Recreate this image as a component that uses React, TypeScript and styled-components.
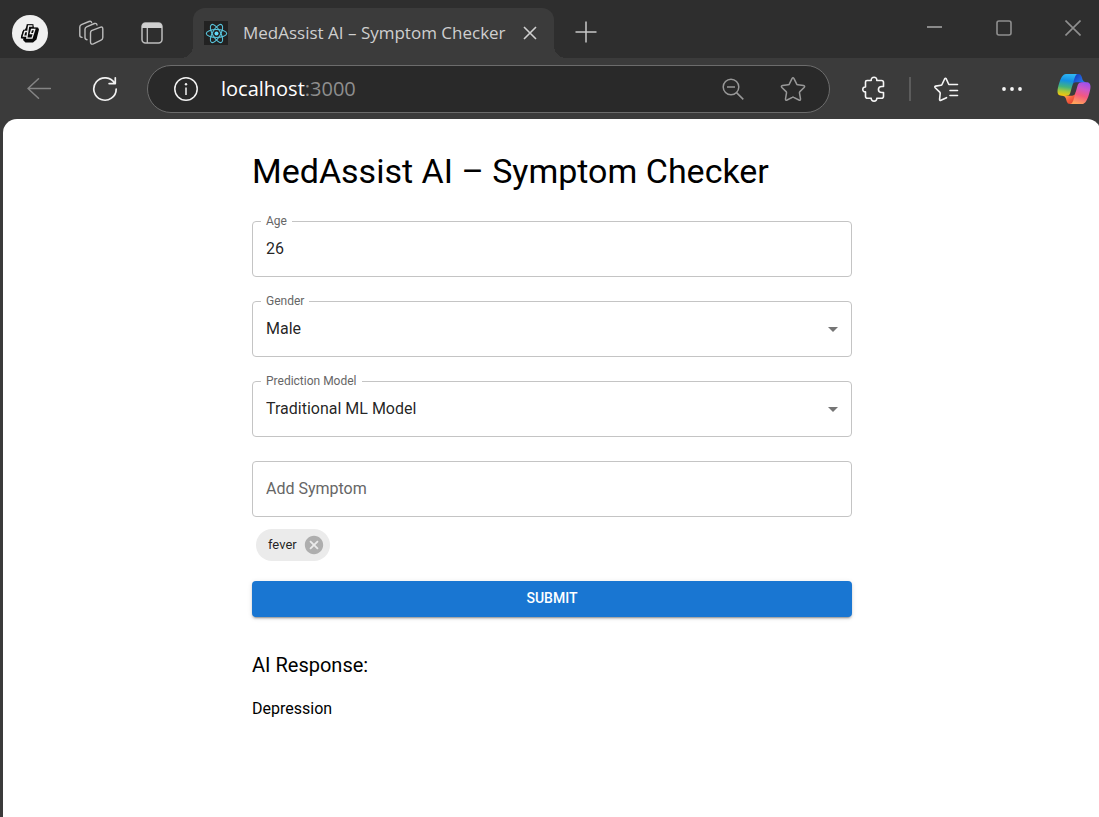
import React, { useState } from "react";
import styled, { createGlobalStyle } from "styled-components";

const GlobalStyle = createGlobalStyle`
  *, *::before, *::after { box-sizing: border-box; }
  body { margin: 0; background: #3b3b3b; }
  button, input, select { font: inherit; color: inherit; margin: 0; }
  button { border: 0; background: none; padding: 0; cursor: pointer; }
  svg { display: block; flex: none; }
`;

const Browser = styled.div`
  min-height: 100vh;
  display: flex;
  flex-direction: column;
  overflow: hidden;
  background: #3b3b3b;
  font-family: "Open Sans", "Noto Sans", sans-serif;
`;

const TabStrip = styled.header`
  display: flex;
  height: 58px;
  padding-left: 12px;
  background: #2e2e2e;
`;

const StripTools = styled.div`
  display: flex;
  align-items: center;
  gap: 25px;
  height: 66px;
  padding-right: 23px;
`;

const StripButton = styled.button`
  display: grid;
  place-items: center;
  width: 36px;
  height: 36px;
`;

const Avatar = styled(StripButton)`
  border-radius: 50%;
  background: #f0f0f0;
`;

const Tab = styled.div`
  position: relative;
  display: flex;
  align-items: center;
  width: 361px;
  height: 50px;
  margin-top: 8px;
  padding: 0 14px 0 11px;
  border-radius: 12px 12px 0 0;
  background: #3b3b3b;
  color: #cfcfcf;

  &::before,
  &::after {
    content: "";
    position: absolute;
    bottom: 0;
    width: 12px;
    height: 12px;
  }
  &::before {
    right: 100%;
    background: radial-gradient(circle at 0 0, transparent 12px, #3b3b3b 12px);
  }
  &::after {
    left: 100%;
    background: radial-gradient(circle at 100% 0, transparent 12px, #3b3b3b 12px);
  }
`;

const TabTitle = styled.span`
  flex: 1;
  margin-left: 15px;
  font-size: 17px;
  line-height: 24px;
  white-space: nowrap;
`;

const TabButton = styled.button`
  display: grid;
  place-items: center;
  width: 20px;
  height: 20px;
`;

const NewTab = styled.button`
  display: grid;
  place-items: center;
  width: 40px;
  height: 40px;
  margin: 12px auto 0 12px;
`;

const WindowControls = styled.div`
  display: flex;
  margin-right: -8px;
`;

const WindowButton = styled.button`
  display: grid;
  place-items: center;
  width: 69px;
  height: 56px;
`;

const Toolbar = styled.nav`
  display: flex;
  align-items: center;
  height: 61px;
  padding: 0 7px 0 6px;
`;

const ToolButton = styled.button`
  display: grid;
  place-items: center;
  width: 66px;
  height: 48px;
`;

const CopilotButton = styled.button`
  display: grid;
  place-items: center end;
  width: 47px;
  height: 48px;
`;

const AddressBar = styled.div`
  flex: 1;
  display: flex;
  align-items: center;
  height: 48px;
  margin: 0 10px 0 9px;
  padding: 0 23px 0 25px;
  border: 1px solid #6c6c6c;
  border-radius: 24px;
  background: #292929;
`;

const Address = styled.span`
  flex: 1;
  margin-left: 22px;
  color: #8e8e8e;
  font-size: 20px;
  line-height: 28px;
  b { color: #fff; font-weight: 400; }
`;

const AddressActions = styled.div`
  display: flex;
  gap: 34px;
`;

const AddressButton = styled.button`
  display: grid;
  place-items: center;
  width: 26px;
  height: 26px;
`;

const Divider = styled.span`
  width: 2px;
  height: 24px;
  margin: 0 2px 0 3px;
  background: #5c5c5c;
`;

const Page = styled.main`
  flex: 1;
  margin: 0 -2px 0 3px;
  padding: 31px 24px;
  border-radius: 14px 14px 0 0;
  background: #fff;
  color: #000;
  font-family: Roboto, "Liberation Sans", sans-serif;
  font-size: 16px;
  line-height: 24px;
`;

const Form = styled.form`
  max-width: 600px;
  margin: 0 auto;
`;

const Title = styled.h1`
  margin: 0 0 29px;
  font-size: 34px;
  font-weight: 400;
  line-height: 42px;
`;

const Field = styled.div`
  position: relative;
  margin-bottom: 24px;
  color: rgba(0, 0, 0, 0.87);
`;

const FieldLabel = styled.label`
  position: absolute;
  top: -8px;
  left: 9px;
  padding: 0 5px;
  background: #fff;
  color: #666;
  font-size: 12px;
  line-height: 16px;
`;

const controlStyle = `
  display: block;
  width: 100%;
  height: 56px;
  border: 1px solid #c4c4c4;
  border-radius: 4px;
  background: transparent;
  outline: none;
  &:focus { border-color: #1976d2; }
`;

const TextInput = styled.input`
  ${controlStyle}
  padding: 0 13px 2px;
  &::placeholder { color: #666; opacity: 1; }
`;

const SelectInput = styled.select`
  ${controlStyle}
  padding: 0 13px;
  appearance: none;
`;

const SelectArrow = styled.svg`
  position: absolute;
  top: 16px;
  right: 7px;
  pointer-events: none;
`;

const Chips = styled.div`
  display: flex;
  flex-wrap: wrap;
  gap: 8px;
  margin: -12px 4px 20px;
`;

const Chip = styled.span`
  display: flex;
  align-items: center;
  gap: 6px;
  height: 32px;
  padding: 0 5px 0 12px;
  border-radius: 16px;
  background: #ebebeb;
  color: rgba(0, 0, 0, 0.87);
  font-size: 13px;
`;

const Submit = styled.button`
  display: block;
  width: 100%;
  height: 36px;
  padding-bottom: 2px;
  border-radius: 4px;
  background: #1976d2;
  box-shadow: 0 3px 1px -2px rgba(0, 0, 0, 0.2), 0 2px 2px rgba(0, 0, 0, 0.14),
    0 1px 5px rgba(0, 0, 0, 0.12);
  color: #fff;
  font-size: 14px;
  font-weight: 500;
  text-transform: uppercase;
`;

const ResponseTitle = styled.h2`
  margin: 32px 0 16px;
  font-size: 20px;
  font-weight: 400;
  line-height: 32px;
`;

const Response = styled.p`
  margin: 0;
`;

const AvatarMark = () => (
  <svg width="22" height="24" viewBox="0 0 22 24" strokeLinejoin="miter">
    <path d="M8.500 3.500h5l1.500 3h4l1 2-2.500 10-3.500 3H6.500L4 19l.5-1.500H2.500l-.5-2 1.500-5 2.500-2z" fill="#0b0b0b" />
    <g fill="none" strokeLinecap="square">
      <path d="M12.800 5H9.200L7.800 17.500H13L15.500 8.500H12l-1.200 4.500h3.500M7.600 10.500H5.500L4 15.500h2.500" stroke="#0b0b0b" strokeWidth="3.400" />
      <path d="M12.800 5H9.600L7.800 17.200H13L15.800 8.500H12.500l-1.200 4.200h2.700M7.400 10.500H5.800L4.400 15.200h2.400" stroke="#f0f0f0" strokeWidth="1.300" />
    </g>
  </svg>
);

const WorkspacesIcon = () => (
  <svg width="26" height="26" viewBox="0 0 26 26" fill="none" stroke="#bdbdbd" strokeWidth="1.4" strokeLinecap="round" strokeLinejoin="round">
    <path d="M13.500 10.600 22 7.300q2.800-1 2.800 1.600v8.700q0 1.800-1.700 2.500l-7.700 3.700q-2.900 1.200-2.900-1.700v-9.200q0-1.600 1-2.300z" />
    <path d="M9 19.800q-2-.2-2-2.200V9.200q0-1.700 1.600-2.400l7.800-3.300q2.300-.7 2.600 1.500" />
    <path d="M4 17.400q-2.200-.2-2.200-2.200V7q0-1.700 1.600-2.400L11 1.500q2-.8 2.600 1" />
  </svg>
);

const VerticalTabsIcon = () => (
  <svg width="24" height="24" viewBox="0 0 24 24">
    <rect x="2" y="2" width="20" height="20" rx="3.500" fill="none" stroke="#bdbdbd" strokeWidth="1.500" />
    <path d="M2 7V5.500A3.500 3.500 0 0 1 5.500 2h13A3.500 3.500 0 0 1 22 5.500V7z" fill="#d0d0d0" />
    <path d="M7.300 7v15" stroke="#bdbdbd" strokeWidth="1.300" />
  </svg>
);

const ReactIcon = () => (
  <svg width="24" height="24" viewBox="0 0 24 24">
    <path fill="#222" d="M0 0h24v24H0z" />
    <g fill="none" stroke="#58c4dc" strokeWidth="1.100">
      <ellipse cx="12.500" cy="12.500" rx="10.200" ry="4" />
      <ellipse cx="12.500" cy="12.500" rx="10.200" ry="4" transform="rotate(60 12.500 12.500)" />
      <ellipse cx="12.500" cy="12.500" rx="10.200" ry="4" transform="rotate(120 12.500 12.500)" />
    </g>
    <circle cx="12.500" cy="12.500" r="2" fill="#61dafb" />
  </svg>
);

const StarIcon = () => (
  <svg width="26" height="26" viewBox="-1 0 26 26" fill="none" stroke="#989898" strokeWidth="1.500" strokeLinejoin="round">
    <path d="M11 2.600q1-1.700 2 0l2.600 5.300q.3.800 1.200.9l5.700.8q1.900.4.600 1.900l-4.200 4.100q-.6.600-.4 1.400l1 5.800q.1 2-1.600 1.200l-5.200-2.700q-.7-.4-1.400 0L6.100 24q-1.700.8-1.600-1.200l1-5.800q.2-.8-.4-1.400L.9 11.500q-1.300-1.500.6-1.900l5.700-.8q.9-.1 1.200-.9z" />
  </svg>
);

const CopilotIcon = () => (
  <svg width="36" height="36" viewBox="0 0 48 48">
    <defs>
      <linearGradient id="cpBlue" x1="24" y1="4" x2="36" y2="16" gradientUnits="userSpaceOnUse">
        <stop stopColor="#1436b8" /><stop offset="1" stopColor="#2a7cf0" />
      </linearGradient>
      <linearGradient id="cpRed" x1="12" y1="31" x2="22" y2="44" gradientUnits="userSpaceOnUse">
        <stop stopColor="#ffb04a" /><stop offset=".5" stopColor="#f8633f" /><stop offset="1" stopColor="#e0402f" />
      </linearGradient>
      <linearGradient id="cpLeft" x1="15" y1="4" x2="11" y2="33" gradientUnits="userSpaceOnUse">
        <stop stopColor="#2fb5f2" /><stop offset=".3" stopColor="#1290e4" /><stop offset=".6" stopColor="#45b37c" />
        <stop offset=".8" stopColor="#a7c83c" /><stop offset="1" stopColor="#f6c60a" />
      </linearGradient>
      <linearGradient id="cpRight" x1="39" y1="15" x2="29" y2="44" gradientUnits="userSpaceOnUse">
        <stop stopColor="#9b50ee" /><stop offset=".3" stopColor="#cf57c6" /><stop offset=".6" stopColor="#f4587f" />
        <stop offset="1" stopColor="#ffa35a" />
      </linearGradient>
    </defs>
    <path fill="url(#cpBlue)" d="M34.142 7.325A4.630 4.630 0 0 0 29.700 4H28.350a4.630 4.630 0 0 0-4.554 3.794L21.480 20.407l.575-1.965a4.630 4.630 0 0 1 4.444-3.330h7.853l3.294 1.282 3.175-1.283h-.926a4.630 4.630 0 0 1-4.443-3.325z" />
    <path fill="url(#cpRed)" d="M14.330 40.656A4.630 4.630 0 0 0 18.779 44h2.870a4.630 4.630 0 0 0 4.629-4.510l.312-12.163-.654 2.233a4.630 4.630 0 0 1-4.443 3.329h-7.919l-2.823-1.532-3.057 1.532h.912a4.630 4.630 0 0 1 4.447 3.344z" />
    <path fill="url(#cpLeft)" d="M29.500 4H13.460c-4.583 0-7.332 6.057-9.165 12.113C2.123 23.290-.720 32.888 7.503 32.888h6.925a4.630 4.630 0 0 0 4.456-3.358 2078.617 2078.617 0 0 1 4.971-17.156c.843-2.843 1.544-5.284 2.621-6.805C27.080 4.717 28.086 4 29.500 4z" />
    <path fill="url(#cpRight)" d="M18.498 44h16.040c4.582 0 7.332-6.058 9.165-12.115 2.171-7.177 5.013-16.775-3.208-16.775h-6.926a4.630 4.630 0 0 0-4.455 3.358 2084.036 2084.036 0 0 1-4.972 17.160c-.842 2.842-1.543 5.283-2.620 6.804-.604.852-1.610 1.568-3.024 1.568z" />
  </svg>
);

type SelectFieldProps = { id: string; label: string; options: string[] };

const SelectField = ({ id, label, options }: SelectFieldProps) => (
  <Field>
    <SelectInput id={id}>
      {options.map((option) => (
        <option key={option}>{option}</option>
      ))}
    </SelectInput>
    <FieldLabel htmlFor={id}>{label}</FieldLabel>
    <SelectArrow width="24" height="24" viewBox="0 0 24 24" aria-hidden="true">
      <path d="m7 10 5 5 5-5z" fill="#757575" />
    </SelectArrow>
  </Field>
);

export default function App() {
  const [symptoms, setSymptoms] = useState(["fever"]);

  return (
    <Browser>
      <GlobalStyle />
      <TabStrip>
        <StripTools>
          <Avatar aria-label="Profile"><AvatarMark /></Avatar>
          <StripButton aria-label="Workspaces"><WorkspacesIcon /></StripButton>
          <StripButton aria-label="Tab actions"><VerticalTabsIcon /></StripButton>
        </StripTools>
        <Tab>
          <ReactIcon />
          <TabTitle>MedAssist AI – Symptom Checker</TabTitle>
          <TabButton aria-label="Close tab">
            <svg width="14" height="14" viewBox="0 0 14 14" stroke="#d0d0d0" strokeWidth="1.600">
              <path d="m1 1 12 12M13 1 1 13" />
            </svg>
          </TabButton>
        </Tab>
        <NewTab aria-label="New tab">
          <svg width="22" height="22" viewBox="0 0 22 22" stroke="#c8c8c8" strokeWidth="1.500">
            <path d="M11 .5v21M.5 11h21" />
          </svg>
        </NewTab>
        <WindowControls>
          <WindowButton aria-label="Minimize">
            <svg width="16" height="16" viewBox="0 0 16 16"><path d="M0 6h15v2H0z" fill="#8a8a8a" /></svg>
          </WindowButton>
          <WindowButton aria-label="Maximize">
            <svg width="16" height="16" viewBox="0 0 16 16" fill="none" stroke="#8f8f8f" strokeWidth="1.600">
              <rect x="1" y="1" width="14" height="14" rx="2" />
            </svg>
          </WindowButton>
          <WindowButton aria-label="Close window">
            <svg width="16" height="16" viewBox="0 0 16 16" stroke="#8f8f8f" strokeWidth="1.600">
              <path d="m.5.5 15 15M15.500.5l-15 15" />
            </svg>
          </WindowButton>
        </WindowControls>
      </TabStrip>

      <Toolbar>
        <ToolButton aria-label="Back">
          <svg width="24" height="22" viewBox="0 0 24 22" fill="none" stroke="#858585" strokeWidth="1.500" strokeLinecap="round" strokeLinejoin="round">
            <path d="M23.500 10.500H1M11.500.8 1 10.500l10.500 9.700" />
          </svg>
        </ToolButton>
        <ToolButton aria-label="Refresh">
          <svg width="26" height="26" viewBox="0 0 26 26" fill="none" stroke="#f2f2f2" strokeWidth="1.700" strokeLinecap="round" strokeLinejoin="round">
            <path d="M24.200 13A11.200 11.200 0 1 1 22.700 7.400M23.300 1.800v5.800h-6.200" />
          </svg>
        </ToolButton>
        <AddressBar>
          <AddressButton aria-label="Site information">
            <svg width="26" height="26" viewBox="0 0 26 26" fill="none" stroke="#f2f2f2" strokeWidth="1.500">
              <circle cx="13" cy="13" r="11.200" />
              <path d="M13 11.500V19" />
              <circle cx="13" cy="8.300" r="1.200" fill="#f2f2f2" stroke="none" />
            </svg>
          </AddressButton>
          <Address><b>localhost</b>:3000</Address>
          <AddressActions>
            <AddressButton aria-label="Zoom">
              <svg width="24" height="24" viewBox="0 0 24 24" fill="none" stroke="#989898" strokeWidth="1.500">
                <circle cx="10" cy="10" r="7.800" />
                <path d="m15.500 15.600 6.800 6.800M6 10h8" />
              </svg>
            </AddressButton>
            <AddressButton aria-label="Add to favorites"><StarIcon /></AddressButton>
          </AddressActions>
        </AddressBar>
        <ToolButton aria-label="Extensions">
          <svg width="24" height="26" viewBox="0 0 24 26" fill="none" stroke="#f5f5f5" strokeWidth="1.600" strokeLinejoin="round">
            <path d="M6 4.500h4.200c-.5-4.400 6.200-4.400 5.600 0h4.700q2 0 2 2v4h-1.700c-4.500 0-4.500 6 0 6h1.700v3.700q0 2-2 2h-4.700c.6 3.900-6.100 3.900-5.600 0H6.500q-2 0-2-2v-4.300c-3.600.4-3.600-5.400 0-4.900V6q0-1.500 1.500-1.500z" />
          </svg>
        </ToolButton>
        <Divider />
        <ToolButton aria-label="Favorites">
          <svg width="26" height="26" viewBox="0 0 26 26" fill="none" stroke="#f5f5f5" strokeWidth="1.600" strokeLinecap="round" strokeLinejoin="round">
            <path d="M13.500 21.700 8 24.200q-1.500.6-1.400-1l.6-5.700q.1-.8-.5-1.400l-4.500-4.400q-1-1.200.4-1.600l5.300-.8q.8-.1 1.100-.8l2.600-5.500q.9-1.500 1.700 0l2.500 5.500h8.700M17 14.500h7.500M17 19.500h7.500" />
          </svg>
        </ToolButton>
        <ToolButton aria-label="Settings and more">
          <svg width="22" height="6" viewBox="0 0 22 6" fill="#f5f5f5">
            <circle cx="3" cy="3" r="1.900" /><circle cx="11" cy="3" r="1.900" /><circle cx="19" cy="3" r="1.900" />
          </svg>
        </ToolButton>
        <CopilotButton aria-label="Copilot"><CopilotIcon /></CopilotButton>
      </Toolbar>

      <Page>
        <Form onSubmit={(event) => event.preventDefault()}>
          <Title>MedAssist AI – Symptom Checker</Title>
          <Field>
            <TextInput id="age" defaultValue="26" inputMode="numeric" />
            <FieldLabel htmlFor="age">Age</FieldLabel>
          </Field>
          <SelectField id="gender" label="Gender" options={["Male", "Female", "Other"]} />
          <SelectField id="model" label="Prediction Model" options={["Traditional ML Model", "LLM"]} />
          <Field>
            <TextInput placeholder="Add Symptom" aria-label="Add Symptom" />
          </Field>
          <Chips>
            {symptoms.map((symptom) => (
              <Chip key={symptom}>
                {symptom}
                <button
                  type="button"
                  aria-label={`Remove ${symptom}`}
                  onClick={() => setSymptoms(symptoms.filter((item) => item !== symptom))}
                >
                  <svg width="22" height="22" viewBox="0 0 24 24" fill="#aeaeae">
                    <path d="M12 2C6.470 2 2 6.470 2 12s4.470 10 10 10 10-4.470 10-10S17.530 2 12 2zm5 13.590L15.590 17 12 13.410 8.410 17 7 15.590 10.590 12 7 8.410 8.410 7 12 10.590 15.590 7 17 8.410 13.410 12z" />
                  </svg>
                </button>
              </Chip>
            ))}
          </Chips>
          <Submit type="submit">Submit</Submit>
          <ResponseTitle>AI Response:</ResponseTitle>
          <Response>Depression</Response>
        </Form>
      </Page>
    </Browser>
  );
}
